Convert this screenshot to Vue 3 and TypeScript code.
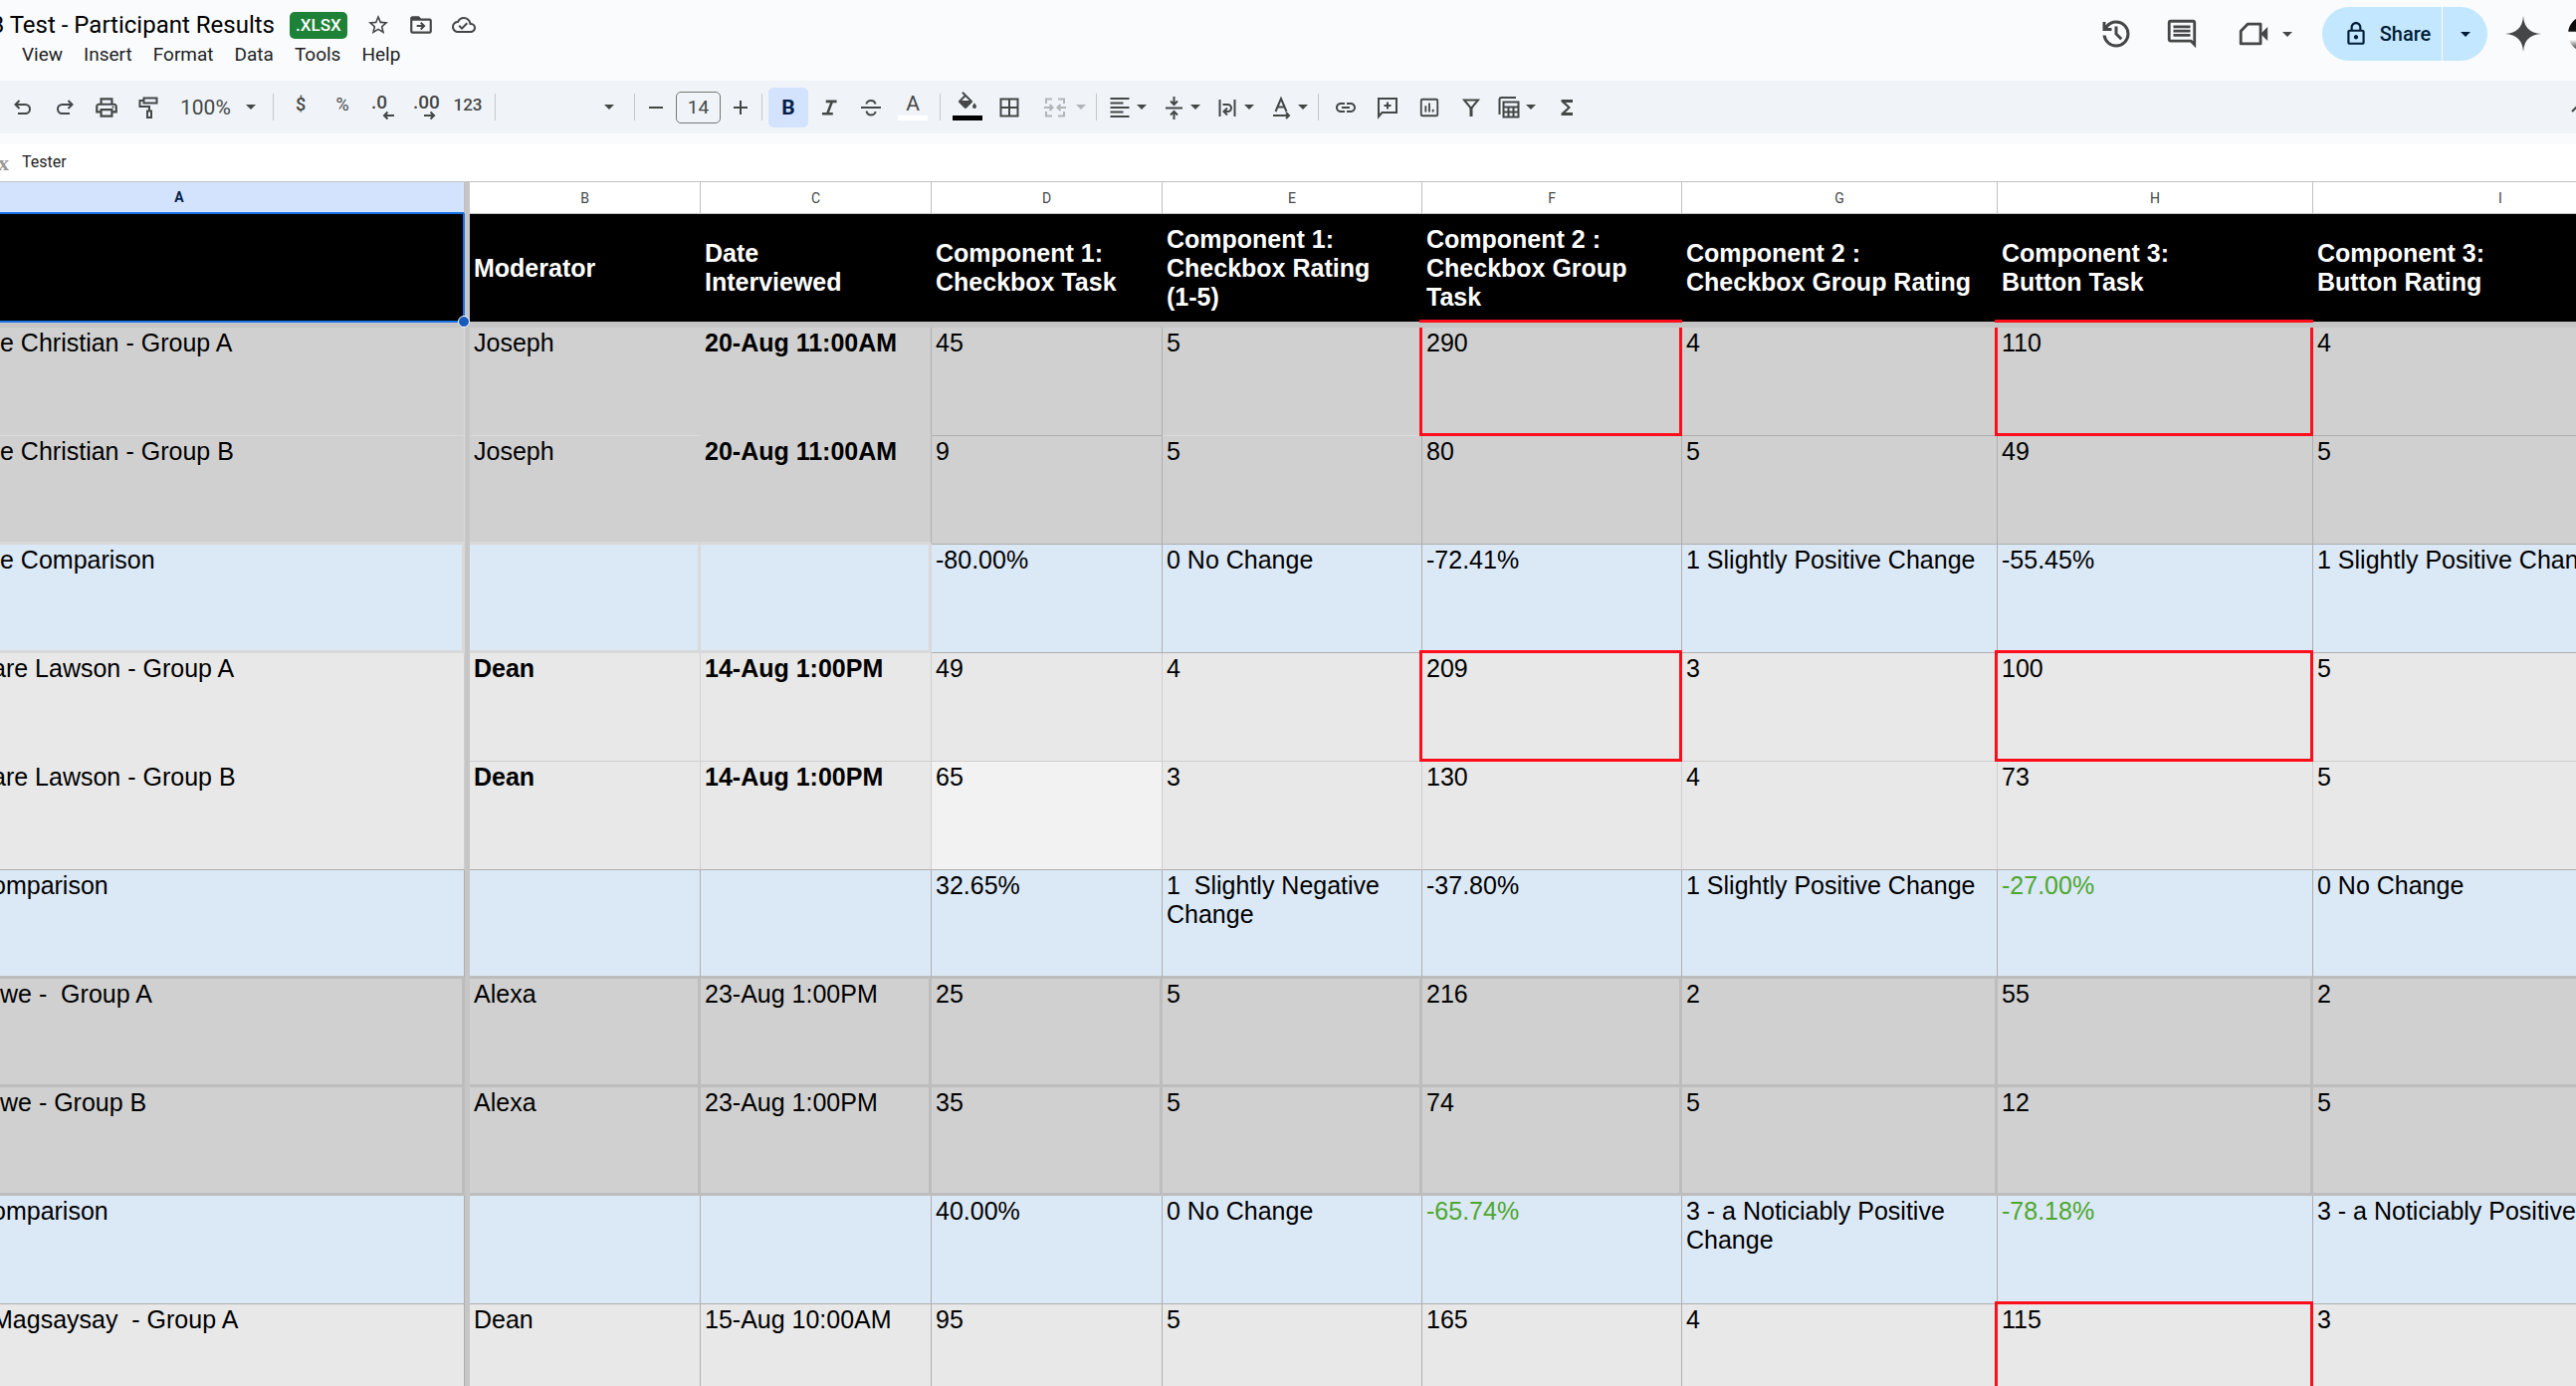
<script setup lang="ts">
type Cell = { t: string; c?: string }
type Row = { tone: string; name: string; clip?: boolean; cells: Cell[] }

const columns = ['B', 'C', 'D', 'E', 'F', 'G', 'H', 'I']
const headings = [
  'Moderator',
  'Date\nInterviewed',
  'Component 1:\nCheckbox Task',
  'Component 1:\nCheckbox Rating\n(1-5)',
  'Component 2 :\nCheckbox Group\nTask',
  'Component 2 :\nCheckbox Group Rating',
  'Component 3:\nButton Task',
  'Component 3:\nButton Rating',
]

const c = (t: string, cls = ''): Cell => ({ t, c: cls })

const rows: Row[] = [
  { tone: 'grey open first', name: 'e Christian - Group A', cells: [c('Joseph', 'faint-b no-r'), c('20-Aug 11:00AM', 'b no-b'), c('45'), c('5', 'faint-b'), c('290', 'flag'), c('4'), c('110', 'flag'), c('4')] },
  { tone: 'grey open last', name: 'e Christian - Group B', cells: [c('Joseph', 'no-r'), c('20-Aug 11:00AM', 'b'), c('9'), c('5'), c('80'), c('5'), c('49'), c('5')] },
  { tone: 'blue framed', name: 'e Comparison', cells: [c(''), c(''), c('-80.00%'), c('0 No Change'), c('-72.41%'), c('1 Slightly Positive Change'), c('-55.45%'), c('1 Slightly Positive Change')] },
  { tone: 'pale soft', name: 'are Lawson - Group A', clip: true, cells: [c('Dean', 'b'), c('14-Aug 1:00PM', 'b'), c('49'), c('4'), c('209', 'flag'), c('3'), c('100', 'flag'), c('5')] },
  { tone: 'pale soft last', name: 'are Lawson - Group B', clip: true, cells: [c('Dean', 'b'), c('14-Aug 1:00PM', 'b'), c('65', 'lit'), c('3'), c('130'), c('4'), c('73'), c('5')] },
  { tone: 'blue base', name: 'omparison', clip: true, cells: [c(''), c(''), c('32.65%'), c('1  Slightly Negative Change'), c('-37.80%'), c('1 Slightly Positive Change'), c('-27.00%', 'green'), c('0 No Change')] },
  { tone: 'grey heavy', name: 'we -  Group A', cells: [c('Alexa'), c('23-Aug 1:00PM'), c('25'), c('5'), c('216'), c('2'), c('55'), c('2')] },
  { tone: 'grey heavy', name: 'we - Group B', cells: [c('Alexa'), c('23-Aug 1:00PM'), c('35'), c('5'), c('74'), c('5'), c('12'), c('5')] },
  { tone: 'blue', name: 'omparison', clip: true, cells: [c(''), c(''), c('40.00%'), c('0 No Change'), c('-65.74%', 'green'), c('3 - a Noticiably Positive Change'), c('-78.18%', 'green'), c('3 - a Noticiably Positive Change')] },
  { tone: 'pale', name: 'Magsaysay  - Group A', clip: true, cells: [c('Dean'), c('15-Aug 10:00AM'), c('95'), c('5'), c('165'), c('4'), c('115', 'flag'), c('3')] },
]
</script>

<template>
  <div class="app">
    <header class="top">
      <div class="doc">
        <div class="title-row">
          <h1 class="title"><span>A/B Test - Participant Results</span></h1>
          <span class="badge">.XLSX</span>
          <button class="doc-btn" aria-label="Star">
            <svg width="24" height="24" viewBox="0 0 24 24"><path fill="currentColor" d="M22 9.24l-7.19-.62L12 2 9.19 8.63 2 9.24l5.46 4.73L5.82 21 12 17.27 18.18 21l-1.63-7.03L22 9.24zM12 15.4l-3.76 2.27 1-4.28-3.32-2.88 4.38-.38L12 6.1l1.71 4.04 4.38.38-3.32 2.88 1 4.28L12 15.4z"/></svg>
          </button>
          <button class="doc-btn" aria-label="Move">
            <svg width="26" height="26" viewBox="0 0 24 24"><path fill="currentColor" d="M20 6h-8l-2-2H4c-1.1 0-2 .9-2 2v12c0 1.1.9 2 2 2h16c1.1 0 2-.9 2-2V8c0-1.1-.9-2-2-2zm0 12H4V8h16v10zm-7.6-1.2L16.2 13l-3.8-3.8-1.3 1.3 1.6 1.6H8v1.8h4.7l-1.6 1.6z"/></svg>
          </button>
          <button class="doc-btn" aria-label="Document status">
            <svg width="24" height="24" viewBox="0 0 24 24"><path fill="currentColor" d="M19.35 10.04A7.49 7.49 0 0 0 12 4C9.11 4 6.6 5.64 5.35 8.04A5.994 5.994 0 0 0 0 14c0 3.31 2.69 6 6 6h13c2.76 0 5-2.24 5-5 0-2.64-2.05-4.78-4.65-4.96zM19 18H6c-2.21 0-4-1.79-4-4 0-2.05 1.53-3.76 3.56-3.97l1.07-.11.5-.95A5.469 5.469 0 0 1 12 6c2.62 0 4.88 1.86 5.39 4.43l.3 1.5 1.53.11A2.98 2.98 0 0 1 22 15c0 1.65-1.35 3-3 3zm-9-3.8l-2.1-2.1-1.4 1.4L10 17l6-6-1.4-1.4z"/></svg>
          </button>
        </div>
        <nav class="menus">
          <button>View</button><button>Insert</button><button>Format</button><button>Data</button><button>Tools</button><button>Help</button>
        </nav>
      </div>
      <div class="actions">
        <button class="act" aria-label="Version history">
          <svg width="36" height="36" viewBox="0 0 24 24"><path fill="currentColor" d="M12 21q-3.45 0-6.01-2.29T3.05 13H5.1q.35 2.6 2.31 4.3T12 19q2.92 0 4.96-2.04T19 12t-2.04-4.96T12 5q-1.73 0-3.23.8T6.25 8H9v2H3V4h2v2.35q1.27-1.6 3.11-2.47T12 3q1.88 0 3.51.71t2.85 1.93 1.93 2.85T21 12t-.71 3.51-1.93 2.85-2.85 1.93T12 21zm2.8-4.8L11 12.4V7h2v4.6l3.2 3.2z"/></svg>
        </button>
        <button class="act" aria-label="Comments">
          <svg width="34" height="34" viewBox="0 0 24 24"><path fill="currentColor" d="M21.99 4c0-1.1-.89-2-1.99-2H4c-1.1 0-2 .9-2 2v12c0 1.1.9 2 2 2h14l4 4-.01-18zM20 4v13.2L18.8 16H4V4h16zM6 12h12v2H6zm0-3h12v2H6zm0-3h12v2H6z"/></svg>
        </button>
        <button class="act video" aria-label="Join a call">
          <svg width="34" height="34" viewBox="0 0 24 24"><path fill="none" stroke="currentColor" stroke-width="2" stroke-linejoin="round" d="M8 5h9v14H3V10z"/><path fill="currentColor" d="M17 12l5-5v10z"/></svg>
          <span class="caret"></span>
        </button>
        <div class="share">
          <button class="share-main">
            <svg width="26" height="26" viewBox="0 0 24 24"><path fill="currentColor" d="M18 8h-1V6c0-2.760-2.240-5-5-5S7 3.240 7 6v2H6c-1.100 0-2 .9-2 2v10c0 1.100.9 2 2 2h12c1.100 0 2-.9 2-2V10c0-1.100-.9-2-2-2zM9 6c0-1.660 1.340-3 3-3s3 1.340 3 3v2H9V6zm9 14H6V10h12v10zm-6-3c1.100 0 2-.9 2-2s-.9-2-2-2-2 .9-2 2 .9 2 2 2z"/></svg>
            Share
          </button>
          <button class="share-more" aria-label="Quick sharing actions"><span class="caret"></span></button>
        </div>
        <button class="gem" aria-label="Assistant">
          <svg width="36" height="36" viewBox="0 0 36 36"><path fill="currentColor" d="M18 0q1 17 18 18q-17 1-18 18q-1-17-18-18q17-1 18-18z"/></svg>
        </button>
        <button class="avatar" aria-label="Account">
          <svg width="36" height="36" viewBox="0 0 36 36"><defs><linearGradient id="av" x1="0" y1="0" x2="0" y2="1"><stop offset="0" stop-color="#000"/><stop offset=".42" stop-color="#111"/><stop offset=".46" stop-color="#fff"/><stop offset=".66" stop-color="#fff"/><stop offset=".8" stop-color="#999"/><stop offset="1" stop-color="#000"/></linearGradient></defs><circle cx="18" cy="18" r="18" fill="url(#av)"/></svg>
        </button>
      </div>
    </header>

    <div class="toolbar">
      <button class="tb" aria-label="Undo"><svg width="24" height="24" viewBox="0 0 24 24"><path class="ln" d="M8.500 5L4.500 9l4 4M5 9h9.500a4.500 4.500 0 0 1 0 9H7"/></svg></button>
      <button class="tb" aria-label="Redo"><svg width="24" height="24" viewBox="0 0 24 24"><path class="ln" d="M15.500 5l4 4-4 4M19 9H9.500a4.500 4.500 0 0 0 0 9H17"/></svg></button>
      <button class="tb" aria-label="Print"><svg width="26" height="26" viewBox="0 0 24 24"><path fill="currentColor" d="M19 8h-1V3H6v5H5c-1.660 0-3 1.340-3 3v6h4v4h12v-4h4v-6c0-1.660-1.340-3-3-3zM8 5h8v3H8V5zm8 14H8v-4h8v4zm2-4v-2H6v2H4v-4c0-.55.450-1 1-1h14c.55 0 1 .45 1 1v4h-2z"/><circle cx="18" cy="11.500" r="1" fill="currentColor"/></svg></button>
      <button class="tb" aria-label="Paint format"><svg width="24" height="24" viewBox="0 0 24 24"><path class="ln" d="M7.500 2.500h13v5h-13zM7.500 5h-4v6h9.500v4M11 15.500h4V22h-4z"/></svg></button>
      <button class="zoom">100%<span class="caret"></span></button>
      <span class="sep"></span>
      <button class="tb txt">$</button>
      <button class="tb txt pct">%</button>
      <button class="tb dec" aria-label="Decrease decimal places"><span>.0</span><svg width="12" height="10" viewBox="0 0 12 10"><path class="ln" d="M12 5H2M5.500 1.500L2 5l3.500 3.500"/></svg></button>
      <button class="tb dec" aria-label="Increase decimal places"><span>.00</span><svg width="12" height="10" viewBox="0 0 12 10"><path class="ln" d="M0 5h10M6.500 1.500L10 5 6.500 8.500"/></svg></button>
      <button class="tb num">123</button>
      <span class="sep"></span>
      <button class="font" aria-label="Font"><span class="caret"></span></button>
      <span class="sep"></span>
      <button class="step" aria-label="Decrease font size"><svg width="14" height="14" viewBox="0 0 14 14"><path class="ln" d="M0 7h14"/></svg></button>
      <input class="size" value="14" aria-label="Font size" />
      <button class="step" aria-label="Increase font size"><svg width="14" height="14" viewBox="0 0 14 14"><path class="ln" d="M0 7h14M7 0v14"/></svg></button>
      <span class="sep"></span>
      <button class="bold" aria-label="Bold">B</button>
      <button class="tb" aria-label="Italic"><svg width="26" height="26" viewBox="0 0 24 24"><path fill="currentColor" d="M5.500 19v-2.500h4L13 7.500H9V5h10v2.500h-3.500L12 16.500h3.500V19z"/></svg></button>
      <button class="tb" aria-label="Strikethrough"><svg width="24" height="24" viewBox="0 0 24 24"><path class="ln" d="M2 12h20M16.500 8.500C16 6 14.500 5 12 5S7.500 6.500 7.500 8.500M7.500 15.500C8 18 9.500 19.500 12 19.500s4.500-1.500 4.500-3.500"/></svg></button>
      <button class="tb color" aria-label="Text color"><span class="glyph">A</span><i class="bar white"></i></button>
      <span class="sep"></span>
      <button class="tb color" aria-label="Fill color"><svg width="24" height="22" viewBox="0 0 24 22"><path fill="currentColor" d="M16.600 9.900L7.600 1 6.200 2.400l2.400 2.400L3.400 9.900c-.6.6-.6 1.500 0 2.100l5.500 5.500c.6.6 1.500.6 2.100 0l5.500-5.500c.7-.6.7-1.500.1-2.100zM6.200 10L10 6.200 13.800 10zM19 12.500s-2 2.200-2 3.500a2 2 0 0 0 4 0c0-1.300-2-3.500-2-3.500z"/></svg><i class="bar"></i></button>
      <button class="tb" aria-label="Borders"><svg width="24" height="24" viewBox="0 0 24 24"><path class="ln" d="M3.500 3.500h17v17h-17zM12 3v18M3 12h18"/></svg></button>
      <button class="dd tight merge" disabled aria-label="Merge cells"><span class="ic"><svg width="24" height="24" viewBox="0 0 24 24"><path class="ln" d="M9 3.500H3V8M3 16v4.500h6M15 3.500h6V8M21 16v4.500h-6M1 12h8M6.500 9L9.500 12l-3 3M23 12h-8M17.500 9l-3 3 3 3"/></svg></span><span class="caret"></span></button>
      <span class="sep"></span>
      <button class="dd" aria-label="Horizontal align"><span class="ic"><svg width="22" height="22" viewBox="0 0 22 22"><path class="ln" d="M1.500 2h19M1.500 6.500h13M1.500 11h19M1.500 15.500h13M1.500 20h19"/></svg></span><span class="caret"></span></button>
      <button class="dd" aria-label="Vertical align"><span class="ic"><svg width="24" height="24" viewBox="0 0 24 24"><path class="ln" d="M4 12.500h17M12.500 1v7.500M9 5.500L12.500 9 16 5.500M12.500 24v-7.500M9 19.500l3.500-3.500 3.500 3.500"/></svg></span><span class="caret"></span></button>
      <button class="dd" aria-label="Text wrapping"><span class="ic"><svg width="24" height="24" viewBox="0 0 24 24"><path class="ln" d="M4.500 4v17M19.500 4v17M7.500 9h5a3.500 3.500 0 0 1 0 7H9M12 12.500L8.500 16l3.500 3.500"/></svg></span><span class="caret"></span></button>
      <button class="dd tight" aria-label="Text rotation"><span class="ic"><svg width="24" height="24" viewBox="0 0 24 24"><path class="ln" d="M6.500 16L12 3l5.500 13M8.500 11.500h7M4 20h16M17 17l3 3-3 3"/></svg></span><span class="caret"></span></button>
      <span class="sep"></span>
      <button class="tb" aria-label="Insert link"><svg width="24" height="24" viewBox="0 0 24 24"><path fill="currentColor" d="M3.900 12c0-1.710 1.390-3.100 3.100-3.100h4V7H7c-2.760 0-5 2.240-5 5s2.240 5 5 5h4v-1.900H7c-1.710 0-3.100-1.390-3.100-3.100zM8 13h8v-2H8v2zm9-6h-4v1.900h4c1.710 0 3.100 1.390 3.100 3.100s-1.390 3.100-3.100 3.100h-4V17h4c2.760 0 5-2.240 5-5s-2.240-5-5-5z"/></svg></button>
      <button class="tb" aria-label="Insert comment"><svg width="24" height="24" viewBox="0 0 24 24"><path class="ln" d="M3 21V3h18v14H6.500zM12 6.500v7M8.500 10h7"/></svg></button>
      <button class="tb" aria-label="Insert chart"><svg width="22" height="22" viewBox="0 0 24 24"><rect class="ln" x="3" y="3" width="18" height="18" rx="1.500"/><path class="ln" d="M8 10v7M12 7v10M16 14v3"/></svg></button>
      <button class="tb" aria-label="Create a filter"><svg width="24" height="24" viewBox="0 0 24 24"><path class="ln" d="M5 4.500h14L12 13z"/><path fill="currentColor" d="M10.500 11h3v10h-3z"/></svg></button>
      <button class="dd" aria-label="Table views"><span class="ic"><svg width="24" height="24" viewBox="0 0 24 24"><path class="ln" d="M2.500 19V4Q2.500 2 4.500 2H19M6.500 6.500h15v15h-15zM6.500 11.500h15M6.500 16.500h15M11.500 11.500v10M16.500 11.500v10"/></svg></span><span class="caret"></span></button>
      <button class="tb" aria-label="Functions"><svg width="24" height="24" viewBox="0 0 24 24"><path fill="currentColor" d="M18 4H6.500v2.200L13 12l-6.500 5.800V20H18v-3h-7.200l5.200-5-5.200-5H18z"/></svg></button>
      <span class="grow"></span>
      <button class="collapse" aria-label="Hide menus"><svg width="18" height="12" viewBox="0 0 18 12"><path class="ln" d="M1 10l8-8 8 8"/></svg></button>
    </div>

    <div class="formula">
      <label class="fx" for="formula"><span>fx</span></label>
      <input id="formula" value="Tester" />
    </div>

    <div class="sheet">
      <table>
        <colgroup>
          <col class="wa" /><col class="bar-col" />
          <col class="w1" /><col class="w1" /><col class="w1" /><col class="w2" /><col class="w2" /><col class="w3" /><col class="w3" /><col class="w4" />
        </colgroup>
        <thead>
          <tr class="letters">
            <th class="sel"><span>A</span></th>
            <th class="freeze"></th>
            <th v-for="l in columns" :key="l">{{ l }}</th>
          </tr>
          <tr class="heads">
            <th class="active"><i class="handle"></i></th>
            <th class="freeze"></th>
            <th v-for="(h, i) in headings" :key="i">{{ h }}</th>
          </tr>
          <tr class="freeze-row"><td colspan="10"></td></tr>
        </thead>
        <tbody>
          <tr v-for="(r, i) in rows" :key="i" :class="r.tone">
            <td class="name" :class="{ clip: r.clip }">{{ r.name }}</td>
            <td class="freeze"></td>
            <td v-for="(cell, j) in r.cells" :key="j" :class="[cell.c, { early: j < 2 }]">{{ cell.t }}</td>
          </tr>
        </tbody>
      </table>
    </div>
  </div>
</template>

<style>
body { margin: 0; }
</style>

<style scoped>
.app {
  height: 100vh;
  display: flex;
  flex-direction: column;
  overflow: hidden;
  background: #f9fbfd;
  color: #444746;
  font-family: Roboto, sans-serif;
}
button {
  border: 0;
  padding: 0;
  background: none;
  color: inherit;
  font: inherit;
  display: flex;
  align-items: center;
  justify-content: center;
}
svg { display: block; flex: none; }
.ln { fill: none; stroke: currentColor; stroke-width: 2; }
.caret {
  flex: none;
  width: 0;
  height: 0;
  border: 5px solid transparent;
  border-top-color: currentColor;
  border-bottom: 0;
}

.top { display: flex; justify-content: space-between; height: 81px; }
.title-row { display: flex; align-items: center; height: 40px; padding-top: 5px; }
.title {
  display: flex;
  justify-content: flex-end;
  width: 276px;
  margin: 0;
  overflow: hidden;
  white-space: nowrap;
  color: #000;
  font: 400 24px/32px Roboto, sans-serif;
}
.badge {
  height: 27px;
  margin: 0 10px 0 15px;
  padding: 0 6px;
  border-radius: 5px;
  background: #1e8138;
  color: #fff;
  font: 500 17px/26px Roboto, sans-serif;
}
.doc-btn { width: 43px; height: 40px; }
.menus { display: flex; gap: 21px; padding-left: 22px; color: #1f1f1f; font: 400 19px/20px Roboto, sans-serif; }

.actions { display: flex; align-items: center; height: 68px; }
.act { width: 66px; height: 54px; }
.act.video { width: 90px; gap: 12px; margin-right: 18px; padding-left: 10px; box-sizing: border-box; }
.share { display: flex; height: 54px; color: #001d35; font: 500 20px/54px Roboto, sans-serif; }
.share button { background: #c2e7ff; }
.share-main { width: 120px; gap: 11px; border-radius: 27px 0 0 27px; padding-left: 10px; box-sizing: border-box; }
.share-more { width: 45px; margin-left: 1px; border-radius: 0 27px 27px 0; }
.gem { width: 72px; height: 54px; }
.avatar { width: 17px; height: 54px; overflow: hidden; justify-content: flex-start; padding-left: 9px; box-sizing: border-box; }

.toolbar { display: flex; align-items: center; height: 53px; padding-left: 2px; background: #f0f4f9; }
.tb { width: 42px; height: 40px; flex: none; }
.sep { flex: none; width: 1px; height: 27px; margin: 0 6px; background: #c7c7c7; }
.zoom { width: 98px; height: 40px; justify-content: space-between; padding: 0 11px; box-sizing: border-box; font: 400 21px/40px Roboto, sans-serif; }
.txt, .num { font: 500 18px/34px Roboto, sans-serif; align-items: flex-start; }
.pct { font-weight: 400; }
.num { font-size: 17px; }
.dec { flex-direction: column; align-items: flex-start; padding-left: 8px; box-sizing: border-box; font: 500 19px/16px Roboto, sans-serif; }
.dec svg { align-self: flex-end; margin-right: 11px; }
.font { width: 127px; height: 40px; justify-content: flex-end; padding-right: 14px; box-sizing: border-box; }
.step { width: 30px; height: 40px; flex: none; }
.size {
  width: 45px;
  height: 32px;
  margin: 0 5px;
  padding: 0;
  box-sizing: border-box;
  border: 1px solid #747775;
  border-radius: 5px;
  background: none;
  color: #444746;
  text-align: center;
  font: 400 19px/30px Roboto, sans-serif;
}
.bold { width: 40px; height: 40px; flex: none; border-radius: 5px; background: #d3e3fd; color: #041e49; font: 700 21px/40px Roboto, sans-serif; }
.color { flex-direction: column; justify-content: flex-start; }
.glyph { height: 28px; font: 400 21px/32px Roboto, sans-serif; }
.color svg { height: 28px; }
.bar { width: 30px; height: 5px; background: #000; }
.bar.white { background: #fff; }
.dd { width: 54px; height: 40px; flex: none; justify-content: flex-start; }
.dd.tight { width: 48px; }
.dd.merge { width: 60px; padding-left: 8px; gap: 4px; color: #b2b5b6; box-sizing: border-box; }
.ic { width: 34px; display: flex; justify-content: center; }
.grow { flex: 1; }
.collapse { width: 5px; overflow: hidden; justify-content: flex-start; }

.formula { display: flex; align-items: center; height: 37px; margin-top: 11px; background: #fff; }
.fx { display: flex; justify-content: flex-end; width: 9px; height: 28px; overflow: hidden; color: #999; font: 700 22px/28px "Liberation Serif", serif; }
.formula input { flex: 1; height: 30px; margin-left: 13px; padding: 0 0 3px; border: 0; outline: 0; background: none; color: #1f1f1f; font: 400 16px/27px Roboto, sans-serif; box-sizing: border-box; }

.sheet { flex: 1; min-height: 0; overflow: hidden; border-top: 1px solid #c0c0c0; background: #fff; }
table { width: 2701px; table-layout: fixed; border-collapse: separate; border-spacing: 0; color: #000; font: 400 25px/29px "Liberation Sans", Arial, sans-serif; }
.wa { width: 467px; }
.bar-col { width: 5px; }
.w1 { width: 232px; }
.w2 { width: 261px; }
.w3 { width: 317px; }
.w4 { width: 377px; }
th, td { padding: 0; box-sizing: border-box; }
.letters th {
  height: 32px;
  border-right: 1px solid #c0c0c0;
  border-bottom: 1px solid #c0c0c0;
  color: #444746;
  font: 400 14px/30px Roboto, sans-serif;
}
.letters .sel { background: #d3e3fd; border-bottom: 2px solid #1a73e8; color: #041e49; font-weight: 700; padding-right: 106px; }
.letters .freeze { border: 0; }
.freeze, .freeze-row td { background: #c6c6c6; }
.heads th { height: 109px; padding-left: 4px; background: #000; color: #fff; text-align: left; vertical-align: middle; white-space: pre; border-bottom: 1px solid #c0c0c0; }
.heads .freeze { padding: 0; background: #c6c6c6; border: 0; }
.heads .active { position: relative; border-right: 2px solid #1a73e8; border-bottom: 2px solid #1a73e8; }
.handle { position: absolute; right: -7px; bottom: -7px; width: 10px; height: 10px; border: 1px solid #fff; border-radius: 50%; background: #185abc; z-index: 2; }
.freeze-row td { height: 5px; line-height: 0; }

tbody td {
  height: 109px;
  padding: 1px 0 0 4px;
  border-right: 1px solid #aeaeae;
  border-bottom: 1px solid #aeaeae;
  vertical-align: top;
  white-space: pre-wrap;
}
tbody .name { padding-left: 0; white-space: pre; }
tbody .name.clip { text-indent: -8px; }
tbody .freeze { padding: 0; border: 0; }
.grey td { background: #d0d0d0; }
.pale td { background: #e8e8e8; }
.blue td { background: #dbe8f6; }
.grey td.freeze, .pale td.freeze, .blue td.freeze { background: #c6c6c6; }
.open .name, .open .faint-b { border-bottom-color: #dadada; }
.open .name { border-right-color: #dadada; }
.open .no-r { border-right-color: #d0d0d0; }
.open .no-b { border-bottom-color: #d0d0d0; }
.open.last .name, .open.last .early,
.framed .name, .framed .early { border-bottom: 3px solid #d9d9d9; }
.framed .name, .framed .early { border-right: 3px solid #d9d9d9; }
.soft td { border-right-color: #cfcfcf; border-bottom-color: #cfcfcf; }
.soft .name { border-bottom-color: #e8e8e8; }
.soft.last td { border-bottom-color: #aeaeae; }
.base td { border-bottom: 3px solid #bdbdbd; }
.heavy td { border-right: 3px solid #bdbdbd; border-bottom: 3px solid #bdbdbd; }
tbody td.freeze { border: 0; }
.b { font-weight: 700; }
.green { color: #4ea72e; }
.pale td.lit { background: #f2f2f2; }
td.flag { position: relative; }
td.flag::after { content: ""; position: absolute; inset: -3px -1px -1px -3px; border: 3px solid #ff0d1b; }
/* the frozen-row divider interrupts the red frame of the first data row */
.first td.flag::after { top: 0; border-top: 0; }
.first td.flag::before { content: ""; position: absolute; inset: -8px -1px auto -3px; height: 3px; background: #ff0d1b; }
</style>
